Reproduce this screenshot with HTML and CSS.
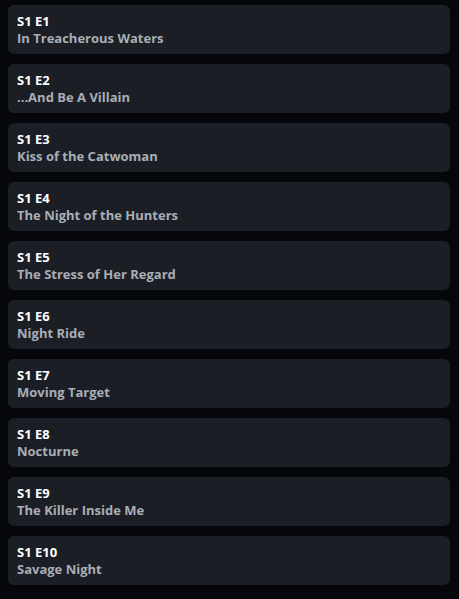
FILE: index.html
```html
<!DOCTYPE html>
<html>
<head>
<meta charset="utf-8">
<link rel="stylesheet" href="styles.css">
</head>
<body>
<ul class="episodes">
  <li class="card"><div class="ep">S1 E1</div><div class="title">In Treacherous Waters</div></li>
  <li class="card"><div class="ep">S1 E2</div><div class="title">...And Be A Villain</div></li>
  <li class="card"><div class="ep">S1 E3</div><div class="title">Kiss of the Catwoman</div></li>
  <li class="card"><div class="ep">S1 E4</div><div class="title">The Night of the Hunters</div></li>
  <li class="card"><div class="ep">S1 E5</div><div class="title">The Stress of Her Regard</div></li>
  <li class="card"><div class="ep">S1 E6</div><div class="title">Night Ride</div></li>
  <li class="card"><div class="ep">S1 E7</div><div class="title">Moving Target</div></li>
  <li class="card"><div class="ep">S1 E8</div><div class="title">Nocturne</div></li>
  <li class="card"><div class="ep">S1 E9</div><div class="title">The Killer Inside Me</div></li>
  <li class="card"><div class="ep">S1 E10</div><div class="title">Savage Night</div></li>
</ul>
</body>
</html>
```
FILE: styles.css
```css
html, body {
  margin: 0;
  padding: 0;
  background: #05070c;
  height: 100%;
}
body {
  font-family: "Open Sans", "Noto Sans", sans-serif;
}
.episodes {
  list-style: none;
  margin: 0;
  padding: 5px 9px 0 8px;
  display: flex;
  flex-direction: column;
  gap: 10px;
}
.card {
  background: #1b1e25;
  border-radius: 6px;
  height: 49px;
  box-sizing: border-box;
  padding: 8px 9px 0 9px;
}
.ep {
  color: #ffffff;
  font-weight: 700;
  font-size: 13px;
  line-height: 17px;
}
.title {
  color: #a9aeb6;
  font-weight: 700;
  font-size: 13px;
  line-height: 17px;
}
```
